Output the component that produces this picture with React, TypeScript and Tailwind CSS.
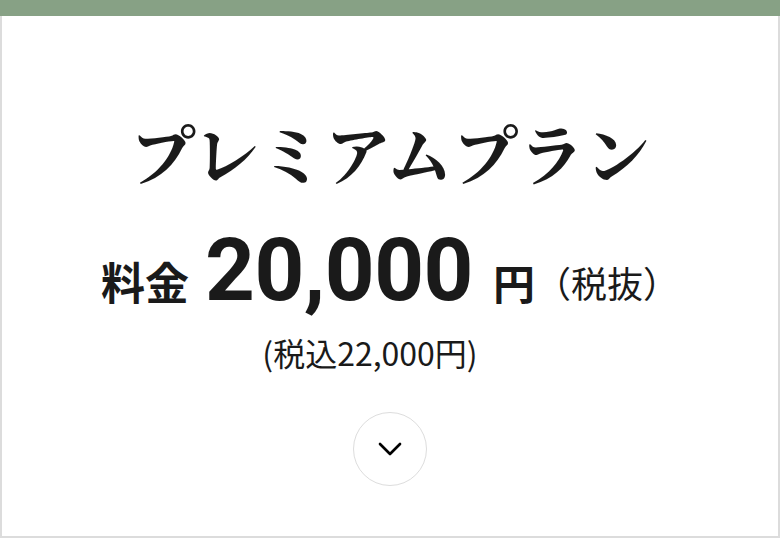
import { ChevronDown } from "lucide-react";

const App = () => {
  return (
    <div className="flex h-[538px] w-[780px] flex-col bg-white">
      <div className="h-4 w-full bg-[#87a185]" />
      <div className="flex flex-1 flex-col items-center border-x-2 border-b-2 border-[#dcdcdc] pt-[103px] text-[#1a1a1a]">
        <h2
          className="text-[66px] leading-none font-bold"
          style={{ fontFamily: '"Noto Serif CJK JP", "Liberation Serif", "Noto Sans CJK JP", serif' }}
        >
          プレミアムプラン
        </h2>

        <div
          className="mt-[45px] flex items-baseline"
          style={{ fontFamily: 'Roboto, "Noto Sans CJK JP", sans-serif' }}
        >
          <span className="text-[44px] font-bold">料金</span>
          <span className="ml-4 text-[87px] leading-[80px] font-bold tracking-[-0.5px]">20,000</span>
          <span className="ml-5 text-[42px] font-bold">円</span>
          <span className="relative -top-[2px] text-[36px]">（税抜）</span>
        </div>

        <p
          className="mr-[40px] mt-[18px] text-[32px] leading-none"
          style={{ fontFamily: '"Noto Sans CJK JP", sans-serif' }}
        >
          (税込22,000円)
        </p>

        <button className="mt-[44px] flex size-[74px] items-center justify-center rounded-full border-[1.5px] border-[#dddddd]">
          <ChevronDown className="size-10 text-black" strokeWidth={1.6} />
        </button>
      </div>
    </div>
  );
};

export default App;
